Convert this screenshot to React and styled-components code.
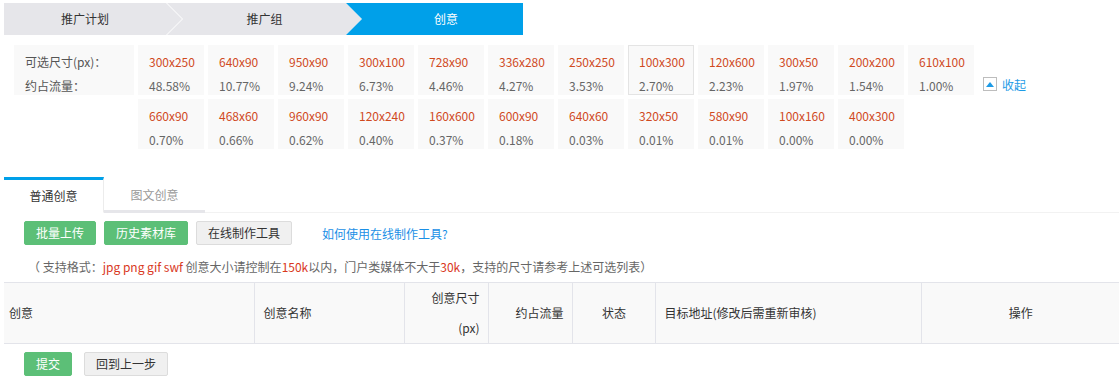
import React from "react";
import styled, { createGlobalStyle } from "styled-components";

const GlobalStyle = createGlobalStyle`
  html, body { margin: 0; padding: 0; background: #fff; }
  body {
    font-family: "Noto Sans CJK SC", "Noto Sans", sans-serif;
    font-size: 12px;
    color: #333;
  }
`;

const Page = styled.div`
  padding: 3px 0 0 4px;
  width: 1115px;
`;

const Steps = styled.div`
  display: flex;
  height: 32px;
`;

const Step = styled.div`
  height: 32px;
  line-height: 32px;
  font-size: 12px;
  text-align: center;
  box-sizing: border-box;
  width: ${(p) => p.$w}px;
  margin-left: ${(p) => p.$ml || 0}px;
  padding-left: ${(p) => p.$pl || 0}px;
  padding-right: ${(p) => p.$pr || 0}px;
  background: ${(p) => (p.$active ? "#00a0e9" : "#e6e6ea")};
  color: ${(p) => (p.$active ? "#fff" : "#333")};
  clip-path: ${(p) => p.$clip};
`;

const SizeGrid = styled.div`
  display: grid;
  grid-template-columns: 120px repeat(12, 66px) auto;
  grid-auto-rows: 50px;
  gap: 4px;
  margin: 10px 0 0 10px;
`;

const LabelCell = styled.div`
  background: #f9f9f9;
  padding: 5px 11px;
  line-height: 24px;
  color: #555;
  box-sizing: border-box;
`;

const SizeCell = styled.div`
  background: #f9f9f9;
  line-height: 24px;
  box-sizing: border-box;
  border: 1px solid ${(p) => (p.$selected ? "#e4e4e4" : "transparent")};
  padding: 4px 0 0 10px;
  grid-column: ${(p) => p.$col || "auto"};
`;

const SizeText = styled.div`
  color: #d04a1e;
`;

const PctText = styled.div`
  color: #666;
`;

const Collapse = styled.a`
  display: flex;
  align-items: center;
  gap: 5px;
  padding-top: 29px;
  margin-left: 5px;
  height: 20px;
  color: #1e9be6;
  font-size: 12px;
  text-decoration: none;
  cursor: pointer;
`;

const CollapseIcon = styled.span`
  display: inline-flex;
  align-items: center;
  justify-content: center;
  width: 14px;
  height: 14px;
  box-sizing: border-box;
  border: 1px solid #bdbdbd;
  background: #fff;
`;

const TabBar = styled.div`
  display: flex;
  align-items: flex-end;
  margin-top: 28px;
  border-bottom: 1px solid #f2f2f2;
`;

const Tab = styled.div`
  box-sizing: border-box;
  width: ${(p) => (p.$active ? 100 : 101)}px;
  height: ${(p) => (p.$active ? 36 : 33)}px;
  text-align: center;
  font-size: 12px;
  margin-bottom: -1px;
  color: ${(p) => (p.$active ? "#333" : "#999")};
  border-top: ${(p) => (p.$active ? "3px solid #00a0e9" : "none")};
  border-right: ${(p) => (p.$active ? "1px solid #ececec" : "none")};
  border-bottom: ${(p) => (p.$active ? "1px solid #fff" : "3px solid #e6e6ea")};
  line-height: ${(p) => (p.$active ? 32 : 30)}px;
`;

const Toolbar = styled.div`
  display: flex;
  align-items: center;
  gap: 8px;
  margin: 8px 0 0 20px;
`;

const Button = styled.button`
  height: 24px;
  padding: 0 11px;
  font-family: inherit;
  font-size: 12px;
  border-radius: 2px;
  cursor: pointer;
  border: 1px solid ${(p) => (p.$primary ? "#5cbf77" : "#dcdcdc")};
  background: ${(p) => (p.$primary ? "#5cbf77" : "#f0f0f0")};
  color: ${(p) => (p.$primary ? "#fff" : "#333")};
  line-height: 22px;
`;

const HelpLink = styled.a`
  margin-left: 22px;
  color: #1a8fe6;
  text-decoration: none;
  font-size: 12px;
`;

const Note = styled.div`
  margin: 12px 0 0 24px;
  line-height: 20px;
  color: #666;
  white-space: nowrap;
`;

const Red = styled.span`
  color: #d9381e;
`;

const Table = styled.table`
  margin-top: 5px;
  width: 1115px;
  border-collapse: collapse;
  table-layout: fixed;
`;

const Th = styled.th`
  background: #f9f9f9;
  border-top: 1px solid #e3e4ea;
  border-bottom: 1px solid #e3e4ea;
  border-left: ${(p) => (p.$first ? "none" : "1px solid #e3e4ea")};
  font-weight: normal;
  color: #333;
  font-size: 12px;
  line-height: 30px;
  height: 60px;
  padding: 0 ${(p) => (p.$pr != null ? p.$pr : 8)}px 0 ${(p) => (p.$pl != null ? p.$pl : 9)}px;
  text-align: ${(p) => p.$align || "left"};
  vertical-align: middle;
  box-sizing: border-box;
`;

const Footer = styled.div`
  display: flex;
  gap: 12px;
  margin: 8px 0 0 20px;
`;

const sizes = [
  ["300x250", "48.58%"], ["640x90", "10.77%"], ["950x90", "9.24%"], ["300x100", "6.73%"],
  ["728x90", "4.46%"], ["336x280", "4.27%"], ["250x250", "3.53%"], ["100x300", "2.70%"],
  ["120x600", "2.23%"], ["300x50", "1.97%"], ["200x200", "1.54%"], ["610x100", "1.00%"],
];
const sizes2 = [
  ["660x90", "0.70%"], ["468x60", "0.66%"], ["960x90", "0.62%"], ["120x240", "0.40%"],
  ["160x600", "0.37%"], ["600x90", "0.18%"], ["640x60", "0.03%"], ["320x50", "0.01%"],
  ["580x90", "0.01%"], ["100x160", "0.00%"], ["400x300", "0.00%"],
];

export default function App() {
  return (
    <>
      <GlobalStyle />
      <Page>
        <Steps>
          <Step $w={178} $pr={16} $clip="polygon(0 0, 162px 0, 178px 16px, 162px 32px, 0 32px)">推广计划</Step>
          <Step $w={195} $ml={-15} $pl={16} $pr={16} $clip="polygon(0 0, 179px 0, 195px 16px, 179px 32px, 0 32px, 16px 16px)">推广组</Step>
          <Step $w={177} $ml={-16} $pl={23} $active $clip="polygon(0 0, 100% 0, 100% 32px, 0 32px, 16px 16px)">创意</Step>
        </Steps>

        <SizeGrid>
          <LabelCell>
            <div>可选尺寸(px)：</div>
            <div>约占流量：</div>
          </LabelCell>
          {sizes.map(([s, p]) => (
            <SizeCell key={s} $selected={s === "100x300"}>
              <SizeText>{s}</SizeText>
              <PctText>{p}</PctText>
            </SizeCell>
          ))}
          <Collapse>
            <CollapseIcon>
              <svg width="8" height="5" viewBox="0 0 8 5">
                <path d="M0 5 L4 0 L8 5 Z" fill="#1e9be6" />
              </svg>
            </CollapseIcon>
            收起
          </Collapse>
          {sizes2.map(([s, p], i) => (
            <SizeCell key={s} $col={i === 0 ? "2" : undefined}>
              <SizeText>{s}</SizeText>
              <PctText>{p}</PctText>
            </SizeCell>
          ))}
        </SizeGrid>

        <TabBar>
          <Tab $active>普通创意</Tab>
          <Tab>图文创意</Tab>
        </TabBar>

        <Toolbar>
          <Button $primary>批量上传</Button>
          <Button $primary>历史素材库</Button>
          <Button>在线制作工具</Button>
          <HelpLink>如何使用在线制作工具?</HelpLink>
        </Toolbar>

        <Note>
          （ 支持格式：<Red>jpg png gif swf</Red> 创意大小请控制在<Red>150k</Red>以内，门户类媒体不大于<Red>30k</Red>，支持的尺寸请参考上述可选列表）
        </Note>

        <Table>
          <colgroup>
            <col style={{ width: 250 }} />
            <col style={{ width: 150 }} />
            <col style={{ width: 84 }} />
            <col style={{ width: 84 }} />
            <col style={{ width: 83 }} />
            <col style={{ width: 266 }} />
            <col style={{ width: 198 }} />
          </colgroup>
          <thead>
            <tr>
              <Th $first $pl={5}>创意</Th>
              <Th>创意名称</Th>
              <Th $align="right">创意尺寸(px)</Th>
              <Th $align="right">约占流量</Th>
              <Th $align="center">状态</Th>
              <Th>目标地址(修改后需重新审核)</Th>
              <Th $align="center">操作</Th>
            </tr>
          </thead>
        </Table>

        <Footer>
          <Button $primary>提交</Button>
          <Button>回到上一步</Button>
        </Footer>
      </Page>
    </>
  );
}
